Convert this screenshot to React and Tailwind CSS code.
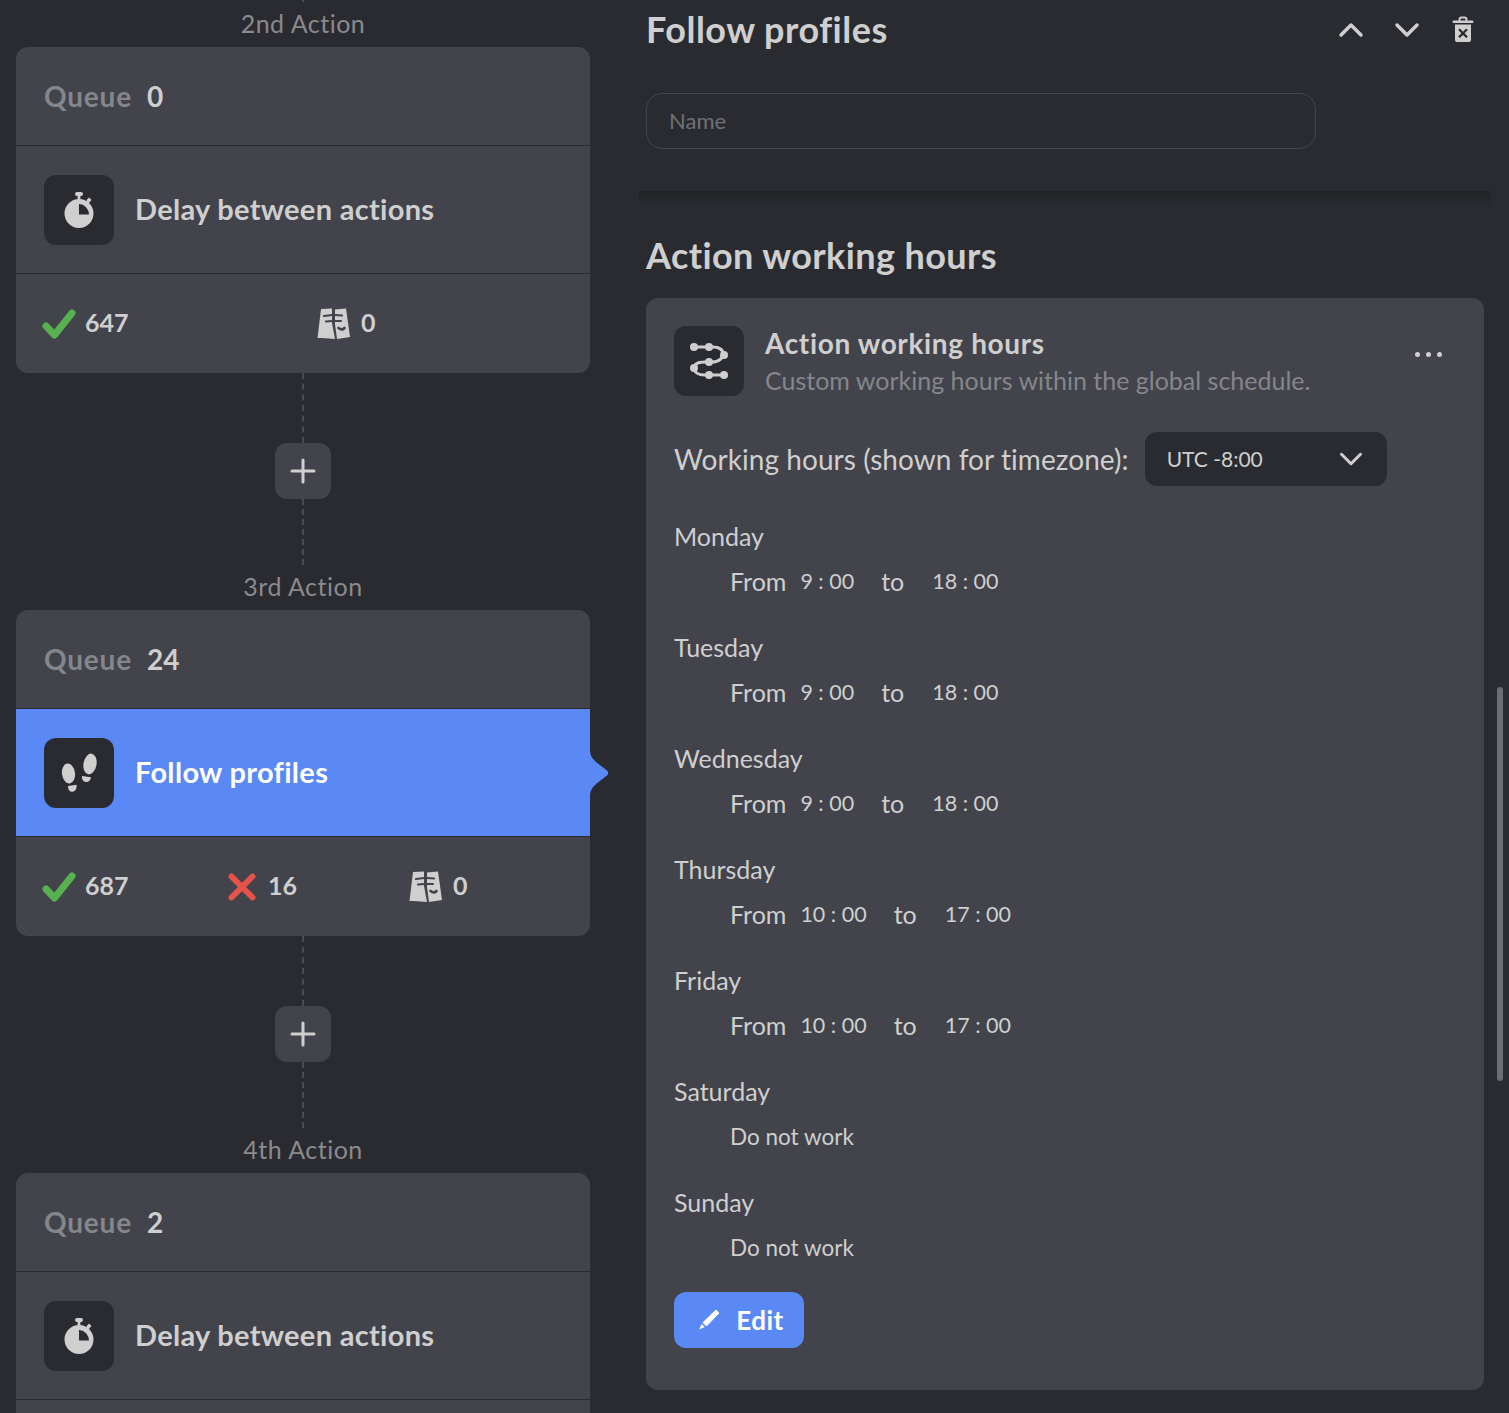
import React from 'react';
import { ChevronUp, ChevronDown } from 'lucide-react';

const days = [
  { day: 'Monday', from: '9 : 00', to: '18 : 00' },
  { day: 'Tuesday', from: '9 : 00', to: '18 : 00' },
  { day: 'Wednesday', from: '9 : 00', to: '18 : 00' },
  { day: 'Thursday', from: '10 : 00', to: '17 : 00' },
  { day: 'Friday', from: '10 : 00', to: '17 : 00' },
  { day: 'Saturday' },
  { day: 'Sunday' },
];

const StopwatchIcon = () => (
  <svg width="32" height="38" viewBox="0 0 32 38" fill="#cfcfcf">
    <rect x="12" y="1" width="8" height="4" rx="2" />
    <rect x="14.6" y="4" width="2.8" height="5" />
    <path d="M24 8.500l2-2 2.600 2.600-2 2-1.200 2.600-2.400-2.400z" />
    <path fillRule="evenodd" d="M16 8a14.500 14.500 0 1 1 0 29 14.500 14.500 0 0 1 0-29zm0 5v10.500h10A10.500 10.500 0 0 0 16.500 13z" />
  </svg>
);

const StepsIcon = () => (
  <svg width="36" height="40" viewBox="0 0 36 40" fill="#cfcfcf">
    <ellipse cx="7.500" cy="20.500" rx="6.500" ry="10" transform="rotate(-8 7.500 20.500)" />
    <path d="M7 33l8.500-1.200c.6 3.600-1 6.800-4.200 7C8.500 39 7 36.500 7 33z" />
    <ellipse cx="29" cy="11" rx="6.500" ry="10.500" transform="rotate(10 29 11)" />
    <path d="M21 23l9 1.300c-.5 3-2.500 5-5.200 4.700C22 28.700 20.800 26 21 23z" />
  </svg>
);

const MasksIcon = () => (
  <svg width="33" height="31" viewBox="0 0 33 31">
    <g fill="#cfcfcf">
      <path d="M4 1L15 0.500V15l3 16-13-1-4.500 0z" />
      <path d="M18 1.500L29 0.500l4 28.500-13 2-2-15z" />
    </g>
    <path d="M7 8l8-1M9 13.500l6-.5M18 7l7 .5M18 13l6 0" stroke="#42434b" strokeWidth="2.200" strokeLinecap="round" />
    <path d="M21.500 20c2 1.600 4.500 1.600 6 0" stroke="#42434b" strokeWidth="2.600" strokeLinecap="round" fill="none" />
  </svg>
);

const RouteIcon = () => (
  <svg width="44" height="44" viewBox="0 0 44 44" fill="none">
    <path d="M7 8h18c8 0 11 3 11 7s-4 8-11 8h-7c-7 0-11 2-11 6s4 7 11 7h18" stroke="#cfcfcf" strokeWidth="3" />
    <g fill="#cfcfcf">
      <circle cx="7" cy="8" r="4" />
      <circle cx="22" cy="8" r="4" />
      <circle cx="37" cy="16" r="4" />
      <circle cx="22" cy="23" r="4" />
      <circle cx="7" cy="29" r="4" />
      <circle cx="22" cy="36" r="4" />
      <circle cx="37" cy="36" r="4" />
    </g>
  </svg>
);

const CheckIcon = () => (
  <svg width="34" height="30" viewBox="0 0 34 30" fill="none">
    <path d="M4 17l8.500 9L30 4" stroke="#58b14f" strokeWidth="7" strokeLinecap="round" strokeLinejoin="round" />
  </svg>
);

const CrossIcon = () => (
  <svg width="28" height="28" viewBox="0 0 28 28" fill="none">
    <path d="M3.500 3.500l21 21M24.500 3.500l-21 21" stroke="#e5534b" strokeWidth="6" strokeLinecap="round" />
  </svg>
);

const TrashIcon = () => (
  <svg width="22" height="28" viewBox="0 0 22 28" fill="none">
    <path d="M7.500 5V3.500a2 2 0 0 1 2-2h3a2 2 0 0 1 2 2V5" stroke="#cfcfcf" strokeWidth="2" />
    <rect x="0.500" y="4.500" width="21" height="2.400" rx="1.200" fill="#cfcfcf" />
    <path fillRule="evenodd" d="M3 8.500h16v15.500a2 2 0 0 1-2 2H5a2 2 0 0 1-2-2zm4.800 4l-1.600 1.600 3.200 3.200-3.200 3.200 1.600 1.600 3.200-3.200 3.200 3.200 1.600-1.600-3.200-3.200 3.200-3.200-1.600-1.600-3.200 3.200z" fill="#cfcfcf" />
  </svg>
);

const PencilIcon = () => (
  <svg width="22" height="22" viewBox="0 0 22 22" fill="#ffffff">
    <path d="M18 1l3 3L8.500 17l-3.500-3.500z" stroke="#ffffff" strokeLinejoin="round" />
    <path d="M3.800 15l3 3-5.800 2.500z" />
  </svg>
);

const Connector = () => (
  <div className="flex flex-col items-center h-[190px]">
    <div className="h-[70px] shrink-0 border-l-2 border-dashed border-[#4a4b52]" />
    <button className="w-14 h-14 rounded-xl bg-[#42434b] flex items-center justify-center shrink-0">
      <svg width="26" height="26" viewBox="0 0 26 26" stroke="#cfcfcf" strokeWidth="3" strokeLinecap="round">
        <path d="M13 2v22M2 13h22" />
      </svg>
    </button>
    <div className="h-[66px] shrink-0 border-l-2 border-dashed border-[#4a4b52]" />
  </div>
);

const Stat = ({ icon, value, className }) => (
  <div className={`flex items-center ${className}`}>
    {icon}
    <span className="text-[#cfcfcf] text-[25px] pb-[2px] font-bold">{value}</span>
  </div>
);

const ActionCard = ({ label, queue, icon, title, active, stats }) => (
  <div>
    <div className="h-[47px] flex items-center justify-center text-[25px] leading-none tracking-[0.5px] text-[#8a8a8d]">{label}</div>
    <div className="relative rounded-xl bg-[#42434b]">
      <div className="h-[99px] px-7 flex items-center border-b border-[#2a2b30] text-[28px]">
        <span className="text-[#85868a] font-bold tracking-[0.8px]">Queue</span>
        <span className="ml-[15px] text-[#cfcfcf] font-bold">{queue}</span>
      </div>
      <div className={`h-[128px] px-7 flex items-center gap-[21px] border-b border-[#2a2b30] ${active ? 'bg-[#5a88f5]' : ''}`}>
        <div className="w-[70px] h-[70px] rounded-xl bg-[#2a2b30] flex items-center justify-center">{icon}</div>
        <span className={`text-[29px] leading-[36px] pb-[2px] font-bold tracking-[0.3px] ${active ? 'text-white' : 'text-[#cfcfcf]'}`}>{title}</span>
      </div>
      {active && (
        <svg className="absolute left-full top-[140px]" width="20" height="46" viewBox="0 0 20 46" fill="#5a88f5">
          <path d="M0 0C0 6 3 9 6 12l11 8.500q2.500 2.500 0 5L6 34C3 37 0 40 0 46z" />
        </svg>
      )}
      {stats}
    </div>
  </div>
);

const App = () => {
  return (
    <div className="relative flex h-[1413px] overflow-hidden bg-[#2a2b30] font-['Lato',sans-serif]">
      {/* Left column with the action chain */}
      <div className="w-[590px] pl-4 shrink-0">
        <ActionCard
          label="2nd Action"
          queue="0"
          title="Delay between actions"
          icon={<StopwatchIcon />}
          stats={
            <div className="h-[99px] pl-[26px] flex items-center">
              <Stat className="w-[275px] gap-[9px]" icon={<CheckIcon />} value="647" />
              <Stat className="gap-[11px]" icon={<MasksIcon />} value="0" />
            </div>
          }
        />
        <Connector />
        <ActionCard
          label="3rd Action"
          queue="24"
          title="Follow profiles"
          active
          icon={<StepsIcon />}
          stats={
            <div className="h-[99px] pl-[26px] flex items-center">
              <Stat className="w-[186px] gap-[9px]" icon={<CheckIcon />} value="687" />
              <Stat className="w-[181px] gap-3" icon={<CrossIcon />} value="16" />
              <Stat className="gap-[11px]" icon={<MasksIcon />} value="0" />
            </div>
          }
        />
        <Connector />
        <ActionCard
          label="4th Action"
          queue="2"
          title="Delay between actions"
          icon={<StopwatchIcon />}
          stats={<div className="h-[99px]" />}
        />
      </div>

      {/* Right column with the action settings */}
      <div className="ml-[49px] w-[852px] shrink-0">
        <div className="h-[191px] px-[7px]">
          <div className="h-[60px] flex items-center justify-between pr-[1px]">
            <h1 className="text-[36px] leading-[44px] pb-[2px] tracking-[0.5px] font-bold text-[#cfcfcf]">Follow profiles</h1>
            <div className="flex items-center gap-4">
              <ChevronUp size={40} strokeWidth={2.100} color="#cfcfcf" />
              <ChevronDown size={40} strokeWidth={2.100} color="#cfcfcf" />
              <div className="w-10 flex justify-center"><TrashIcon /></div>
            </div>
          </div>
          <div className="mt-[33px] w-[670px] h-14 rounded-2xl border border-[#42434b] bg-[#2a2b30] px-[22px] pb-[2px] flex items-center text-[22px] text-[#6f7075]">
            Name
          </div>
        </div>
        <div className="h-[107px] px-[7px] bg-gradient-to-b from-[#222327] to-[#2a2b30] to-[16%] flex items-start">
          <h2 className="mt-[40px] text-[36px] leading-[48px] tracking-[0.4px] font-bold text-[#cfcfcf]">Action working hours</h2>
        </div>
        <div className="ml-[7px] w-[838px] h-[1092px] rounded-xl bg-[#42434b] px-7 pt-7">
          <div className="flex items-start">
            <div className="w-[70px] h-[70px] rounded-xl bg-[#2a2b30] flex items-center justify-center"><RouteIcon /></div>
            <div className="ml-[21px] flex-1">
              <div className="text-[28px] leading-[34px] tracking-[0.65px] font-bold text-[#cfcfcf]">Action working hours</div>
              <div className="text-[25px] leading-[40px] text-[#85868a]">Custom working hours within the global schedule.</div>
            </div>
            <div className="mt-[26px] mr-[14px] flex gap-[6px]">
              <span className="w-[5px] h-[5px] rounded-full bg-[#cfcfcf]" />
              <span className="w-[5px] h-[5px] rounded-full bg-[#cfcfcf]" />
              <span className="w-[5px] h-[5px] rounded-full bg-[#cfcfcf]" />
            </div>
          </div>
          <div className="mt-8 flex items-center text-[#cfcfcf]">
            <span className="text-[28px] leading-[54px] tracking-[0.06px]">Working hours (shown for timezone):</span>
            <div className="ml-4 w-[242px] h-[54px] rounded-xl bg-[#2a2b30] pl-[22px] pr-[17px] flex items-center justify-between text-[21px]">
              UTC -8:00
              <ChevronDown size={38} strokeWidth={1.900} color="#cfcfcf" />
            </div>
          </div>
          <div className="mt-[28px]">
            {days.map((d) => (
              <div key={d.day} className="h-[111px] text-[#cfcfcf]">
                <div className="h-[45px] flex items-center text-[25px]">{d.day}</div>
                <div className="h-[45px] pl-14 flex items-center text-[25px]">
                  {d.from ? (
                    <>
                      <span>From</span>
                      <span className="ml-[14px] text-[21.5px]">{d.from}</span>
                      <span className="ml-[27px]">to</span>
                      <span className="ml-[28px] text-[21.5px]">{d.to}</span>
                    </>
                  ) : (
                    <span className="text-[22.5px]">Do not work</span>
                  )}
                </div>
              </div>
            ))}
          </div>
          <button className="mt-[1px] w-[130px] h-14 pl-[4px] rounded-xl bg-[#5a88f5] flex items-center justify-center gap-4 text-white text-[26px] tracking-[0.5px] font-bold">
            <PencilIcon />
            Edit
          </button>
        </div>
      </div>

      {/* Scrollbar thumb */}
      <div className="absolute left-[1497px] top-[687px] w-[6px] h-[394px] rounded-sm bg-[#6d6e73]" />
      {/* Tail of the connector above the first card */}
      <div className="absolute left-[302px] top-0 w-[2px] h-[2px] bg-[#4a4b52]" />
    </div>
  );
};

export default App;
